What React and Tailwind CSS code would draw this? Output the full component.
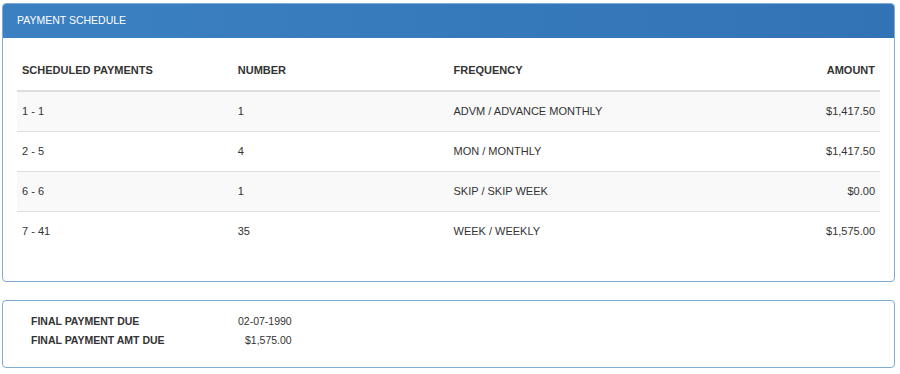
const rows = [
  { range: "1 - 1", number: "1", frequency: "ADVM / ADVANCE MONTHLY", amount: "$1,417.50" },
  { range: "2 - 5", number: "4", frequency: "MON / MONTHLY", amount: "$1,417.50" },
  { range: "6 - 6", number: "1", frequency: "SKIP / SKIP WEEK", amount: "$0.00" },
  { range: "7 - 41", number: "35", frequency: "WEEK / WEEKLY", amount: "$1,575.00" },
];

function App() {
  return (
    <div className="h-[374px] w-[900px] bg-white px-[2px] pt-[3px] font-['Liberation_Sans',Arial,sans-serif] text-[11px] text-[#333]">
      <div className="h-[279px] w-[893px] overflow-hidden rounded-[4px] border border-[#7fabd9]">
        <div className="flex h-[34px] items-center bg-gradient-to-r from-[#3b81c2] to-[#3273b5] px-[14px] text-[10.5px] text-white">
          PAYMENT SCHEDULE
        </div>

        <div className="px-[14px] pt-[20px]">
          <table className="w-full table-fixed text-left">
            <thead>
              <tr className="h-[33px] border-b-2 border-[#ddd] align-top font-bold">
                <th className="w-1/4 px-[5px] pt-[4px]">SCHEDULED PAYMENTS</th>
                <th className="w-1/4 px-[5px] pt-[4px]">NUMBER</th>
                <th className="w-1/4 px-[5px] pt-[4px]">FREQUENCY</th>
                <th className="w-1/4 px-[5px] pt-[4px] text-right">AMOUNT</th>
              </tr>
            </thead>
            <tbody>
              {rows.map((row, index) => (
                <tr
                  key={row.range}
                  className={`h-[40px] ${index < rows.length - 1 ? "border-b border-[#ddd]" : ""} ${index % 2 === 0 ? "bg-[#f9f9f9]" : "bg-white"}`}
                >
                  <td className="px-[5px]">{row.range}</td>
                  <td className="px-[5px]">{row.number}</td>
                  <td className="px-[5px]">{row.frequency}</td>
                  <td className="px-[5px] text-right">{row.amount}</td>
                </tr>
              ))}
            </tbody>
          </table>
        </div>
      </div>

      <div className="mt-[18px] h-[68px] w-[893px] rounded-[4px] border border-[#7fabd9] px-[28px] pt-[14px] text-[10.5px]">
        <div className="grid grid-cols-[207px_auto] justify-start gap-y-[7px] leading-[12px]">
          <div className="font-bold">FINAL PAYMENT DUE</div>
          <div className="text-right">02-07-1990</div>
          <div className="font-bold">FINAL PAYMENT AMT DUE</div>
          <div className="text-right">$1,575.00</div>
        </div>
      </div>
    </div>
  );
}

export default App;
